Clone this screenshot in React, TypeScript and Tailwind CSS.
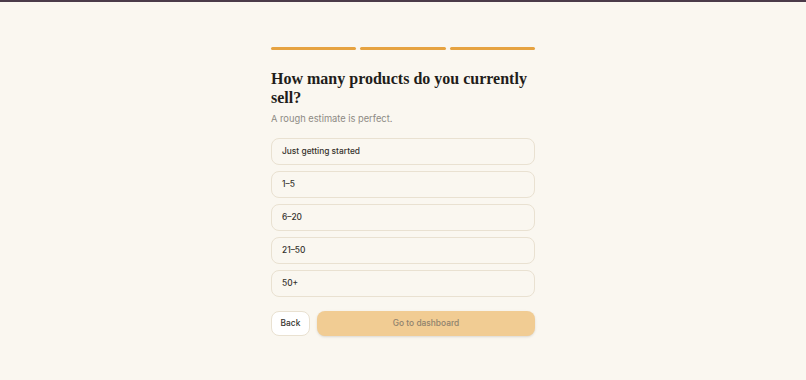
export default function App() {
    const options = ["Just getting started", "1–5", "6–20", "21–50", "50+"];

    return (
        <div className="min-h-[380px] w-full bg-[#faf7f0] font-['Inter',sans-serif]">
            <div className="h-[2px] bg-[#4b3b49]" />
            <div className="mx-auto w-[264px] pt-[45px]">
                {/* progress */}
                <div className="flex gap-[4px]">
                    <div className="h-[3px] flex-1 rounded-full bg-[#e6a341]" />
                    <div className="h-[3px] flex-1 rounded-full bg-[#e6a341]" />
                    <div className="h-[3px] flex-1 rounded-full bg-[#e6a341]" />
                </div>

                <h1 className="mt-[19px] font-['Liberation_Serif',serif] text-[16px] font-bold leading-[19px] text-[#1f1d1a]">
                    How many products do you currently sell?
                </h1>
                <p className="mt-[5px] text-[9.3px] text-[#8d8a84]">A rough estimate is perfect.</p>

                <div className="mt-[12px] flex flex-col gap-[6px]">
                    {options.map((opt) => (
                        <button
                            key={opt}
                            className="flex h-[27px] items-center rounded-[8px] border border-[#e9e1d1] bg-[#faf7f0] px-[10px] text-left text-[8.4px] font-medium text-[#35322d]"
                        >
                            {opt}
                        </button>
                    ))}
                </div>

                <div className="mt-[14px] flex gap-[7px]">
                    <button className="h-[25px] w-[39px] rounded-[8px] border border-[#e9e1d1] bg-white text-[8.4px] font-medium text-[#35322d]">
                        Back
                    </button>
                    <button className="h-[25px] flex-1 rounded-[8px] bg-[#f1cc93] text-[8.4px] font-medium text-[#8f826d] shadow-sm">
                        Go to dashboard
                    </button>
                </div>
            </div>
        </div>
    );
}
